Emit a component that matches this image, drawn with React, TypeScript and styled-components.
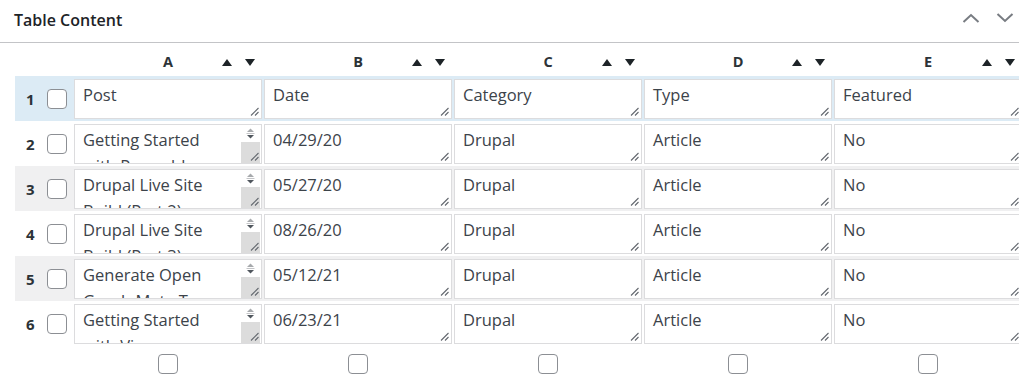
import React from "react";
import styled, { createGlobalStyle } from "styled-components";

const GlobalStyle = createGlobalStyle`
  html, body {
    margin: 0;
    padding: 0;
    background: #ffffff;
    overflow: hidden;
  }
  body {
    font-family: "Open Sans", "Noto Sans", "Liberation Sans", sans-serif;
    color: #2c3338;
  }
  * { box-sizing: border-box; }
`;

const Panel = styled.section`
  width: 1019px;
  height: 382px;
  overflow: hidden;
  background: #fff;
`;

const PanelHeader = styled.header`
  display: flex;
  align-items: center;
  justify-content: space-between;
  height: 43px;
  padding: 0 4px 0 14px;
  border-bottom: 1px solid #c3c4c7;
`;

const Title = styled.h2`
  margin: 0;
  font-size: 16px;
  font-weight: 600;
  color: #1d2327;
  line-height: 1;
  padding-bottom: 3px;
`;

const HeaderActions = styled.div`
  display: flex;
  gap: 14px;
  padding-bottom: 6px;
`;

const IconButton = styled.button`
  width: 20px;
  height: 14px;
  padding: 0;
  border: 0;
  background: transparent;
  display: flex;
  align-items: center;
  justify-content: center;
  color: #787c82;
`;

const TableWrap = styled.div`
  padding-left: 15px;
`;

const Grid = styled.div<{ $bg?: string }>`
  display: grid;
  grid-template-columns: 58px repeat(5, 190px);
  width: 1008px;
  background: ${(p) => p.$bg || "transparent"};
`;

const HeadRow = styled(Grid)`
  height: 33px;
  align-items: center;
`;

const ColHead = styled.div`
  display: flex;
  align-items: center;
  justify-content: center;
  position: relative;
  font-size: 14.5px;
  font-weight: 700;
  color: #2c3338;
  padding-top: 4px;
`;

const SortArrows = styled.div`
  position: absolute;
  right: 8px;
  top: 50%;
  margin-top: -1px;
  display: flex;
  gap: 13px;
  color: #1d2327;
`;

const RowHead = styled.div`
  display: flex;
  align-items: center;
  padding-left: 11px;
  gap: 11px;
`;

const RowNum = styled.span`
  width: 10px;
  font-size: 15px;
  font-weight: 700;
  color: #2c3338;
`;

const Check = styled.span`
  display: inline-block;
  width: 20px;
  height: 20px;
  border: 1px solid #8c8f94;
  border-radius: 4px;
  background: #fff;
`;

const Cell = styled.div`
  padding: 3px 1px 2px 1px;
  height: 45px;
`;

const Field = styled.div<{ $scroll?: boolean }>`
  position: relative;
  height: 40px;
  border: 1px solid #dcdcde;
  background: #fff;
  padding: 2px ${(p) => (p.$scroll ? "30px" : "8px")} 0 8px;
  font-size: 16.5px;
  line-height: 26px;
  color: #3c434a;
  overflow: hidden;
  word-wrap: break-word;
`;

const Grip = styled.svg`
  position: absolute;
  right: 2px;
  bottom: 2px;
  width: 9px;
  height: 9px;
`;

const ScrollBar = styled.div`
  position: absolute;
  right: 1px;
  top: 0;
  bottom: 0;
  width: 19px;
  display: flex;
  flex-direction: column;
  background: #fff;
`;

const ScrollArrows = styled.svg`
  width: 19px;
  height: 16px;
  flex: none;
`;

const ScrollThumb = styled.div`
  flex: 1;
  margin-top: 1px;
  background: #dcdcdc;
`;

const FootRow = styled(Grid)`
  padding-top: 8px;
`;

const FootCell = styled.div`
  display: flex;
  justify-content: center;
`;

const Chevron = ({ dir }: { dir: "up" | "down" }) => (
  <svg width="18" height="10" viewBox="0 0 18 10" fill="none">
    <path
      d={dir === "up" ? "M1.5 9 L9 2 L16.5 9" : "M1.5 1 L9 8 L16.5 1"}
      stroke="currentColor"
      strokeWidth="2"
    />
  </svg>
);

const GripIcon = () => (
  <Grip viewBox="0 0 9 9">
    <path d="M8.5 1 L1 8.5 M8.5 5 L5 8.5" stroke="#646970" strokeWidth="1.1" />
  </Grip>
);

const Triangle = ({ up }: { up?: boolean }) => (
  <svg width="10" height="7" viewBox="0 0 10 7">
    <path d={up ? "M0 7 L5 0 L10 7 Z" : "M0 0 L10 0 L5 7 Z"} fill="currentColor" />
  </svg>
);

const FakeScroll = () => (
  <ScrollBar>
    <ScrollArrows viewBox="0 0 19 16">
      <path d="M6 7 L9.5 3.5 L13 7 Z" fill="#a7aaad" />
      <path d="M5.5 8.5 H13.5" stroke="#c3c4c7" strokeWidth="1" />
      <path d="M6 10 L13 10 L9.5 13.5 Z" fill="#50575e" />
    </ScrollArrows>
    <ScrollThumb />
  </ScrollBar>
);

const letters = ["A", "B", "C", "D", "E"];

const rows: string[][] = [
  ["Post", "Date", "Category", "Type", "Featured"],
  ["Getting Started with Pressable", "04/29/20", "Drupal", "Article", "No"],
  ["Drupal Live Site Build (Part 2)", "05/27/20", "Drupal", "Article", "No"],
  ["Drupal Live Site Build (Part 3)", "08/26/20", "Drupal", "Article", "No"],
  ["Generate Open Graph Meta Tags", "05/12/21", "Drupal", "Article", "No"],
  ["Getting Started with Vimeo", "06/23/21", "Drupal", "Article", "No"],
];

const rowBg = (i: number) => (i === 0 ? "#dcebf5" : i % 2 === 0 ? "#f0f0f1" : "transparent");

export default function App() {
  return (
    <Panel>
      <GlobalStyle />
      <PanelHeader>
        <Title>Table Content</Title>
        <HeaderActions>
          <IconButton aria-label="Move up">
            <Chevron dir="up" />
          </IconButton>
          <IconButton aria-label="Move down">
            <Chevron dir="down" />
          </IconButton>
        </HeaderActions>
      </PanelHeader>
      <TableWrap>
        <HeadRow>
          <div />
          {letters.map((l) => (
            <ColHead key={l}>
              {l}
              <SortArrows>
                <Triangle up />
                <Triangle />
              </SortArrows>
            </ColHead>
          ))}
        </HeadRow>
        {rows.map((r, i) => (
          <Grid key={i} $bg={rowBg(i)}>
            <RowHead>
              <RowNum>{i + 1}</RowNum>
              <Check />
            </RowHead>
            {r.map((v, j) => {
              const scroll = i > 0 && j === 0;
              return (
                <Cell key={j}>
                  <Field $scroll={scroll}>
                    {v}
                    {scroll && <FakeScroll />}
                    <GripIcon />
                  </Field>
                </Cell>
              );
            })}
          </Grid>
        ))}
        <FootRow>
          <div />
          {letters.map((l) => (
            <FootCell key={l}>
              <Check />
            </FootCell>
          ))}
        </FootRow>
      </TableWrap>
    </Panel>
  );
}
